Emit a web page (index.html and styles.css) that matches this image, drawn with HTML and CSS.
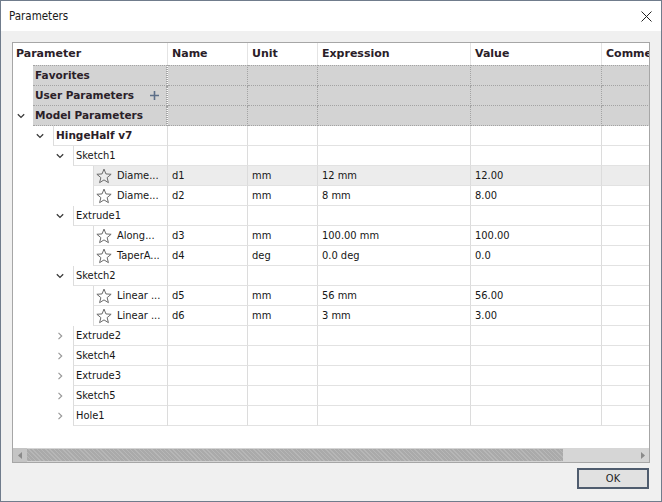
FILE: index.html
```html
<!DOCTYPE html>
<html>
<head>
<meta charset="utf-8">
<title>Parameters</title>
<link rel="stylesheet" href="styles.css">
</head>
<body>
<svg width="0" height="0" class="defs">
  <defs>
    <symbol id="star" viewBox="0 0 16 16">
      <polygon points="8,1.1 9.94,5.93 15.13,6.28 11.14,9.62 12.41,14.67 8,11.9 3.59,14.67 4.86,9.62 0.87,6.28 6.06,5.93" fill="none" stroke="#6b6b6b" stroke-width="1" stroke-linejoin="round"/>
    </symbol>
    <symbol id="down" viewBox="0 0 8 8">
      <polyline points="0.8,2.2 4,5.4 7.2,2.2" fill="none" stroke="#3a3a3a" stroke-width="1.3"/>
    </symbol>
    <symbol id="right" viewBox="0 0 8 8">
      <polyline points="2.5,0.8 5.7,4 2.5,7.2" fill="none" stroke="#9a9a9a" stroke-width="1.2"/>
    </symbol>
  </defs>
</svg>
<div class="window">
  <div class="titlebar">
    <span class="title">Parameters</span>
    <svg class="close" width="11" height="11" viewBox="0 0 11 11"><path d="M0.5 0.5 L10.5 10.5 M10.5 0.5 L0.5 10.5" stroke="#222" stroke-width="1"/></svg>
  </div>
  <div class="body">
    <div class="table">
      <div class="head">
        <div class="h param-h">Parameter</div>
        <div class="h name">Name</div>
        <div class="h unit">Unit</div>
        <div class="h expr">Expression</div>
        <div class="h val">Value</div>
        <div class="h com">Comment</div>
      </div>

      <div class="row grey first">
        <div class="c param"><span class="indent l0"></span><span class="label b">Favorites</span></div>
        <div class="c name"></div><div class="c unit"></div><div class="c expr"></div><div class="c val"></div><div class="c com"></div>
      </div>
      <div class="row grey">
        <div class="c param"><span class="indent l0"></span><span class="label b">User Parameters<svg class="plus" width="9" height="9" viewBox="0 0 9 9"><path d="M4.5 0 V9 M0 4.5 H9" stroke="#5d6f89" stroke-width="1.6"/></svg></span></div>
        <div class="c name"></div><div class="c unit"></div><div class="c expr"></div><div class="c val"></div><div class="c com"></div>
      </div>
      <div class="row grey">
        <div class="c param"><span class="indent l0 m0"><svg class="chev"><use href="#down"/></svg></span><span class="label b">Model Parameters</span></div>
        <div class="c name"></div><div class="c unit"></div><div class="c expr"></div><div class="c val"></div><div class="c com"></div>
      </div>
      <div class="row">
        <div class="c param"><span class="indent l1"><svg class="chev"><use href="#down"/></svg></span><span class="label b">HingeHalf v7</span></div>
        <div class="c name"></div><div class="c unit"></div><div class="c expr"></div><div class="c val"></div><div class="c com"></div>
      </div>
      <div class="row">
        <div class="c param"><span class="indent l2"><svg class="chev"><use href="#down"/></svg></span><span class="label">Sketch1</span></div>
        <div class="c name"></div><div class="c unit"></div><div class="c expr"></div><div class="c val"></div><div class="c com"></div>
      </div>
      <div class="row sel">
        <div class="c param"><span class="indent l3"></span><span class="label"><svg class="star"><use href="#star"/></svg>Diame...</span></div>
        <div class="c name">d1</div><div class="c unit">mm</div><div class="c expr">12 mm</div><div class="c val">12.00</div><div class="c com"></div>
      </div>
      <div class="row">
        <div class="c param"><span class="indent l3"></span><span class="label"><svg class="star"><use href="#star"/></svg>Diame...</span></div>
        <div class="c name">d2</div><div class="c unit">mm</div><div class="c expr">8 mm</div><div class="c val">8.00</div><div class="c com"></div>
      </div>
      <div class="row">
        <div class="c param"><span class="indent l2"><svg class="chev"><use href="#down"/></svg></span><span class="label">Extrude1</span></div>
        <div class="c name"></div><div class="c unit"></div><div class="c expr"></div><div class="c val"></div><div class="c com"></div>
      </div>
      <div class="row">
        <div class="c param"><span class="indent l3"></span><span class="label"><svg class="star"><use href="#star"/></svg>Along...</span></div>
        <div class="c name">d3</div><div class="c unit">mm</div><div class="c expr">100.00 mm</div><div class="c val">100.00</div><div class="c com"></div>
      </div>
      <div class="row">
        <div class="c param"><span class="indent l3"></span><span class="label"><svg class="star"><use href="#star"/></svg>TaperA...</span></div>
        <div class="c name">d4</div><div class="c unit">deg</div><div class="c expr">0.0 deg</div><div class="c val">0.0</div><div class="c com"></div>
      </div>
      <div class="row">
        <div class="c param"><span class="indent l2"><svg class="chev"><use href="#down"/></svg></span><span class="label">Sketch2</span></div>
        <div class="c name"></div><div class="c unit"></div><div class="c expr"></div><div class="c val"></div><div class="c com"></div>
      </div>
      <div class="row">
        <div class="c param"><span class="indent l3"></span><span class="label"><svg class="star"><use href="#star"/></svg>Linear ...</span></div>
        <div class="c name">d5</div><div class="c unit">mm</div><div class="c expr">56 mm</div><div class="c val">56.00</div><div class="c com"></div>
      </div>
      <div class="row">
        <div class="c param"><span class="indent l3"></span><span class="label"><svg class="star"><use href="#star"/></svg>Linear ...</span></div>
        <div class="c name">d6</div><div class="c unit">mm</div><div class="c expr">3 mm</div><div class="c val">3.00</div><div class="c com"></div>
      </div>
      <div class="row">
        <div class="c param"><span class="indent l2"><svg class="chev"><use href="#right"/></svg></span><span class="label">Extrude2</span></div>
        <div class="c name"></div><div class="c unit"></div><div class="c expr"></div><div class="c val"></div><div class="c com"></div>
      </div>
      <div class="row">
        <div class="c param"><span class="indent l2"><svg class="chev"><use href="#right"/></svg></span><span class="label">Sketch4</span></div>
        <div class="c name"></div><div class="c unit"></div><div class="c expr"></div><div class="c val"></div><div class="c com"></div>
      </div>
      <div class="row">
        <div class="c param"><span class="indent l2"><svg class="chev"><use href="#right"/></svg></span><span class="label">Extrude3</span></div>
        <div class="c name"></div><div class="c unit"></div><div class="c expr"></div><div class="c val"></div><div class="c com"></div>
      </div>
      <div class="row">
        <div class="c param"><span class="indent l2"><svg class="chev"><use href="#right"/></svg></span><span class="label">Sketch5</span></div>
        <div class="c name"></div><div class="c unit"></div><div class="c expr"></div><div class="c val"></div><div class="c com"></div>
      </div>
      <div class="row">
        <div class="c param"><span class="indent l2"><svg class="chev"><use href="#right"/></svg></span><span class="label">Hole1</span></div>
        <div class="c name"></div><div class="c unit"></div><div class="c expr"></div><div class="c val"></div><div class="c com"></div>
      </div>

      <div class="filler"></div>
      <div class="hscroll">
        <div class="arrow left"><svg width="5" height="7" viewBox="0 0 5 7"><polygon points="4,0 0,3.5 4,7" fill="#8a8a8a"/></svg></div>
        <div class="thumb"></div>
        <div class="track"></div>
        <div class="arrow right"><svg width="5" height="7" viewBox="0 0 5 7"><polygon points="1,0 5,3.5 1,7" fill="#8a8a8a"/></svg></div>
      </div>
    </div>
    <div class="footer">
      <button class="ok">OK</button>
    </div>
  </div>
</div>
</body>
</html>
```

FILE: styles.css
```css
html, body {
  margin: 0;
  padding: 0;
  background: #f0f0f0;
}
.defs {
  position: absolute;
  width: 0;
  height: 0;
}
.window {
  width: 660px;
  height: 500px;
  border: 1px solid #707c8c;
  background: #f0f0f0;
  display: flex;
  flex-direction: column;
  font-family: "DejaVu Sans Condensed", "DejaVu Sans", sans-serif;
  font-size: 11px;
  color: #161616;
}
.titlebar {
  height: 30px;
  background: #ffffff;
  display: flex;
  align-items: center;
  justify-content: space-between;
  padding: 0 9px 0 8px;
  flex: none;
}
.title {
  font-size: 11.5px;
  color: #1a1a1a;
}
.close {
  display: block;
  margin-top: 1px;
}
.body {
  flex: 1;
  display: flex;
  flex-direction: column;
  padding: 11px 11px 0 11px;
}
.table {
  width: 636px;
  height: 419px;
  border: 1px solid #a6a6a6;
  background: #ffffff;
  overflow: hidden;
  display: flex;
  flex-direction: column;
}
.head, .row {
  display: flex;
  flex: none;
  width: 800px;
}
.head {
  height: 22px;
}
.h {
  box-sizing: border-box;
  height: 22px;
  line-height: 22px;
  padding-left: 4px;
  font-family: "DejaVu Sans", sans-serif;
  font-weight: bold;
  font-size: 11px;
  color: #2a2028;
  border-right: 1px solid #e4e4e4;
  white-space: nowrap;
  overflow: hidden;
  flex: none;
}
.param-h { width: 155px; padding-left: 3px; }
.param { width: 155px; }
.name { width: 80px; }
.unit { width: 70px; }
.expr { width: 153px; }
.val { width: 131px; }
.com { width: 200px; }

.row {
  height: 20px;
}
.row.first {
  height: 21px;
}
.c {
  box-sizing: border-box;
  flex: none;
  height: 100%;
  border-right: 1px solid #dcdcdc;
  border-bottom: 1px solid #e2e2e2;
  padding-left: 4px;
  line-height: 19px;
  white-space: nowrap;
  overflow: hidden;
}
.c.param {
  display: flex;
  padding: 0;
  border-bottom: none;
}
.indent {
  flex: none;
  height: 100%;
  display: flex;
  align-items: center;
  justify-content: flex-end;
  background: #ffffff;
}
.l0 { width: 20px; }
.l1 { width: 40px; }
.l2 { width: 60px; }
.l3 { width: 80px; }
.chev {
  width: 8px;
  height: 8px;
  margin-right: 9px;
  display: block;
}
.m0 .chev { margin-right: 8px; }
.label {
  flex: 1;
  min-width: 0;
  box-sizing: border-box;
  height: 100%;
  border-left: 1px solid #dcdcdc;
  border-bottom: 1px solid #e2e2e2;
  padding-left: 2px;
  display: flex;
  align-items: center;
  white-space: nowrap;
  overflow: hidden;
}
.label.b {
  font-family: "DejaVu Sans", sans-serif;
  font-weight: bold;
  font-size: 10.5px;
  color: #2a2028;
}
.star {
  width: 16px;
  height: 16px;
  margin: 0 5px 0 0;
  flex: none;
}
.plus {
  margin-left: 16px;
  flex: none;
}

/* grey group rows */
.row.grey .c:not(.param),
.row.grey .label {
  background: #d3d3d3;
  border-right: 1px dotted #a3a3a3;
  border-bottom: 1px dotted #a3a3a3;
}
.row.grey .label {
  border-left: none;
}
.row.grey .c.param {
  border-right: 1px dotted #a3a3a3;
}
.row.grey.first .c:not(.param),
.row.grey.first .label {
  border-top: 1px dotted #a3a3a3;
}

/* selected row */
.row.sel .c:not(.param),
.row.sel .label {
  background: #ececec;
}

.filler {
  height: 22px;
  flex: none;
}
.hscroll {
  height: 14px;
  flex: none;
  display: flex;
  background: #d4d4d4;
}
.arrow {
  flex: none;
  display: flex;
  align-items: center;
  justify-content: center;
}
.arrow.left {
  width: 14px;
  background: #c4c4c4;
}
.arrow.right {
  width: 9px;
  justify-content: flex-start;
}
.thumb {
  width: 536px;
  flex: none;
  margin: 1px 0;
  background:
    repeating-linear-gradient(45deg, rgba(255,255,255,0.15) 0 1px, transparent 1px 3px),
    #aaaaaa;
}
.track {
  flex: 1;
  background: #d6d6d6;
}
.footer {
  display: flex;
  justify-content: flex-end;
  padding: 5px 1px 0 0;
}
.ok {
  width: 72px;
  height: 21px;
  box-sizing: border-box;
  border: 2px solid #4f5c6e;
  background: #e1e1e1;
  font-family: "DejaVu Sans Condensed", "DejaVu Sans", sans-serif;
  font-size: 11px;
  color: #1e1e1e;
  padding: 0;
  margin: 0;
}
```
